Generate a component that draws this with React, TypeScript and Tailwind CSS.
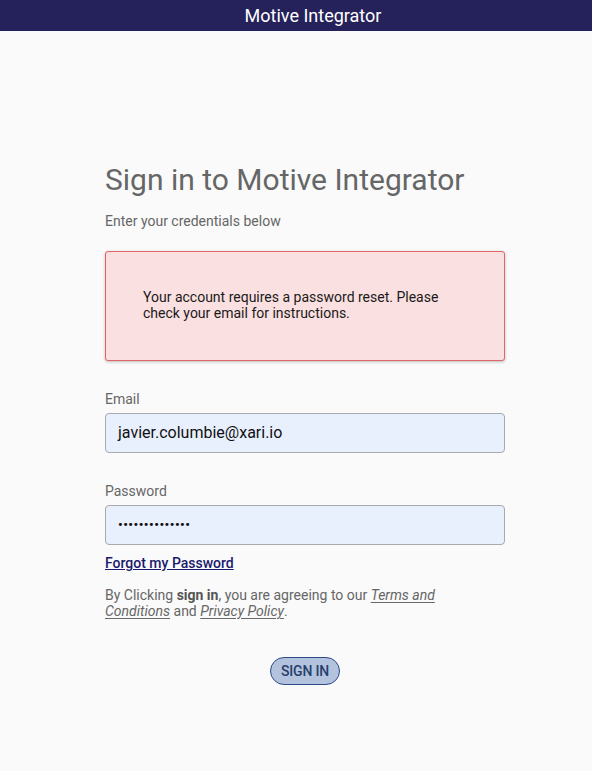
import React from "react";

export default function App() {
  return (
    <div className="min-h-[771px] bg-[#fafafa]" style={{ fontFamily: "Roboto, 'Liberation Sans', sans-serif" }}>
      <header className="h-[31px] bg-[#25215a] flex items-center justify-center pl-[34px]">
        <span className="text-white text-[18px] leading-none">Motive Integrator</span>
      </header>
      <main className="w-[400px] ml-[105px] pt-[130px]">
        <h1 className="text-[30px] leading-[37px] text-[#666666]">Sign in to Motive Integrator</h1>
        <p className="mt-[15px] text-[14px] leading-[16px] text-[#666666]">Enter your credentials below</p>
        <div className="mt-[22px] h-[110px] rounded-[3px] border border-[#e06666] bg-[#fbe0e1] shadow-[0_1px_3px_rgba(0,0,0,0.25)] pl-[37px] pr-[37px] pt-[37px]">
          <p className="text-[14px] leading-[16px] text-[#1a1a1a]">
            Your account requires a password reset. Please check your email for instructions.
          </p>
        </div>
        <label className="block mt-[30px] text-[14px] leading-[16px] text-[#666666]">Email</label>
        <div className="mt-[6px] h-[40px] rounded-[4px] border border-[#a9a9b0] bg-[#e8f0fe] flex items-center pl-[12px] text-[16px] text-[#111111]">
          javier.columbie@xari.io
        </div>
        <label className="block mt-[30px] text-[14px] leading-[16px] text-[#666666]">Password</label>
        <div className="mt-[6px] h-[40px] rounded-[4px] border border-[#a9a9b0] bg-[#e8f0fe] flex items-center pl-[12px] text-[16px] text-[#111111]">
          <span className="text-[13px] font-bold tracking-[0.5px]">••••••••••••••</span>
        </div>
        <a className="block mt-[10px] text-[14px] leading-[16px] font-medium text-[#1a1a6e] underline">Forgot my Password</a>
        <p className="mt-[16px] pr-[60px] text-[14px] leading-[16px] text-[#666666]">
          By Clicking <span className="font-bold text-[#555555]">sign in</span>, you are agreeing to our{" "}
          <a className="italic underline underline-offset-2">Terms and Conditions</a> and{" "}
          <a className="italic underline underline-offset-2">Privacy Policy</a>.
        </p>
        <div className="mt-[38px] flex justify-center">
          <button className="h-[28px] px-[10px] rounded-full border border-[#2d4a8a] bg-[#b3c3dd] text-[14px] font-medium text-[#283f6e] tracking-[-0.2px]">
            SIGN IN
          </button>
        </div>
      </main>
    </div>
  );
}
